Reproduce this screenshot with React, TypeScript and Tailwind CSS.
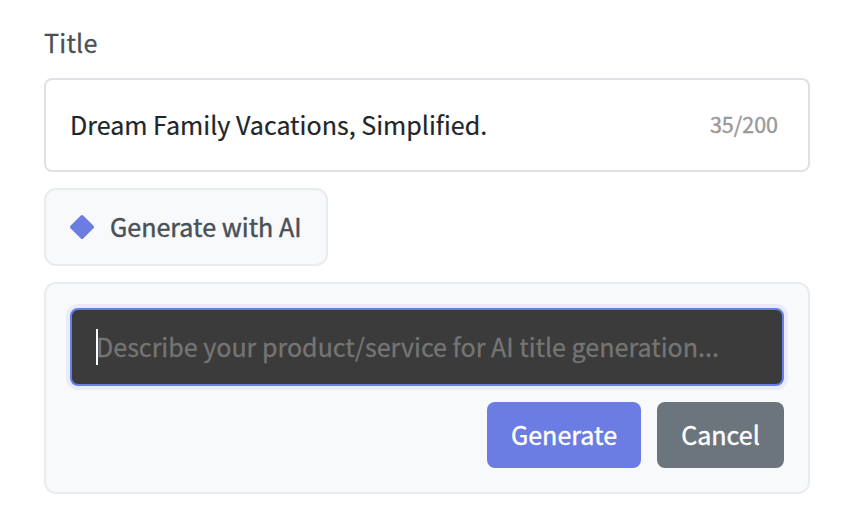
export default function App() {
  return (
    <main className="h-[522px] w-[854px] overflow-hidden bg-white px-11 pt-[23px] font-['Noto_Sans_CJK_SC','Noto_Sans',sans-serif] text-[25.07px] leading-[38px] whitespace-nowrap [-webkit-text-stroke:0.3px_currentColor]">
      <div className="h-[55px] tracking-[0.25px] text-[#495057]">Title</div>
      <div className="flex h-[94px] items-center justify-between rounded-lg border-2 border-[#dee2e6] pr-[30px] pb-[2px] pl-6 text-[#212529] [-webkit-text-stroke:0.2px_currentColor]">
        <span>Dream Family Vacations, Simplified.</span>
        <span className="text-[21.5px] text-[#999999] [-webkit-text-stroke:0.4px_currentColor]">35/200</span>
      </div>
      <button className="mt-4 flex h-[78px] w-[284px] items-center rounded-xl border-2 border-[#e9ecef] bg-[#f8f9fb] pl-6 text-[#495057]">
        <svg className="mr-4 h-6 w-6 shrink-0" viewBox="0 0 24 24" fill="#6b7de3">
          <path d="M10.8 0.5 Q12 -0.5 13.2 0.5 L23.5 10.8 Q24.5 12 23.5 13.2 L13.2 23.5 Q12 24.5 10.8 23.5 L0.5 13.2 Q-0.5 12 0.5 10.8 Z" />
        </svg>
        <span className="pb-[2px] [-webkit-text-stroke:0.45px_currentColor]">Generate with AI</span>
      </button>
      <section className="mt-4 h-[212px] rounded-xl border-2 border-[#e9ecef] bg-[#f8f9fb] p-6">
        <div className="relative flex h-[78px] items-center rounded-lg border-2 border-[#667eea] bg-[#3b3b3b] pb-[2px] pl-6 text-[#757575] ring-4 ring-[#e9ebf8]">
          <span className="absolute top-[19px] left-6 h-9 w-0.5 bg-white" />
          Describe your product/service for AI title generation...
        </div>
        <div className="mt-4 flex justify-end gap-4 text-white [-webkit-text-stroke:0.4px_currentColor]">
          <button className="h-[66px] w-[154px] rounded-lg bg-[#6b7de3] pb-[2px]">Generate</button>
          <button className="h-[66px] w-[127px] rounded-lg bg-[#6c757d] pb-[2px]">Cancel</button>
        </div>
      </section>
    </main>
  );
}
